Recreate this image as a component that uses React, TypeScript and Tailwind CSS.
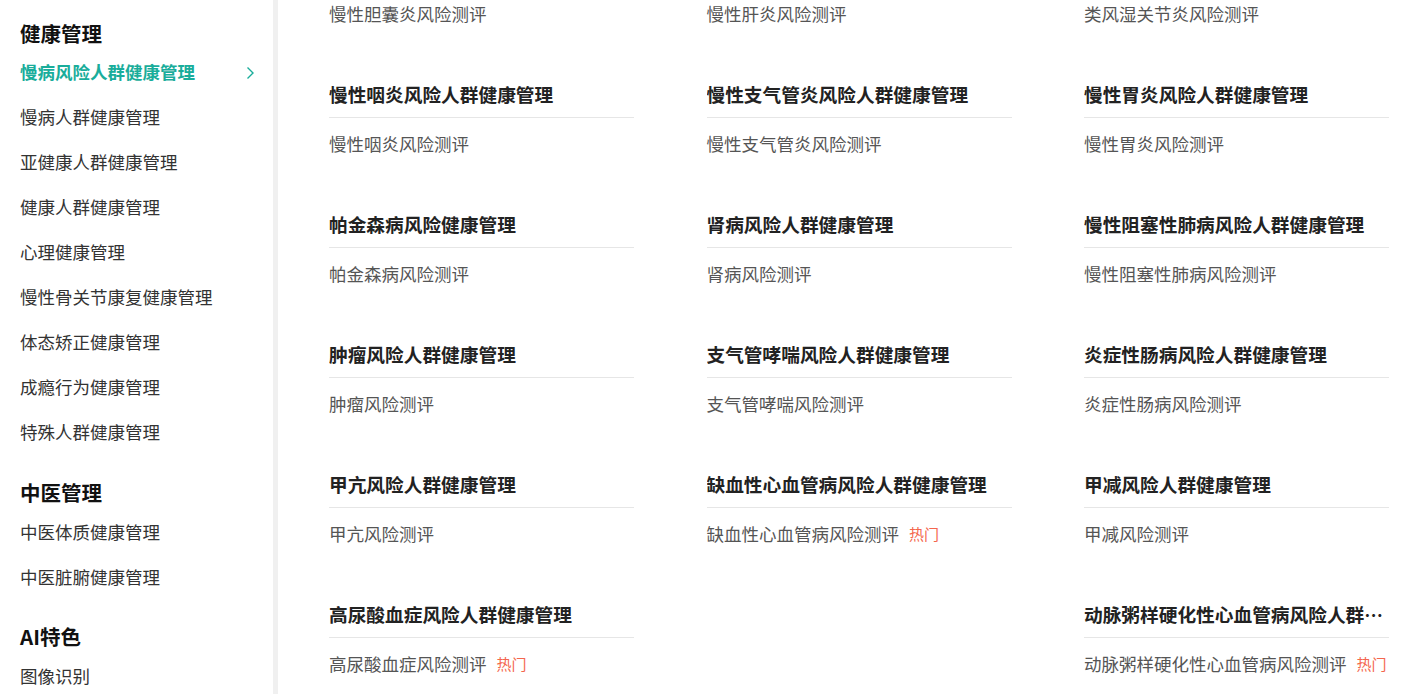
import React from "react";

type Card = { title?: string; item: string; hot?: boolean } | null;

const sections: { heading: string; items: string[] }[] = [
  {
    heading: "健康管理",
    items: [
      "慢病风险人群健康管理",
      "慢病人群健康管理",
      "亚健康人群健康管理",
      "健康人群健康管理",
      "心理健康管理",
      "慢性骨关节康复健康管理",
      "体态矫正健康管理",
      "成瘾行为健康管理",
      "特殊人群健康管理",
    ],
  },
  { heading: "中医管理", items: ["中医体质健康管理", "中医脏腑健康管理"] },
  { heading: "AI特色", items: ["图像识别"] },
];

const topRow: string[] = ["慢性胆囊炎风险测评", "慢性肝炎风险测评", "类风湿关节炎风险测评"];

const rows: Card[][] = [
  [
    { title: "慢性咽炎风险人群健康管理", item: "慢性咽炎风险测评" },
    { title: "慢性支气管炎风险人群健康管理", item: "慢性支气管炎风险测评" },
    { title: "慢性胃炎风险人群健康管理", item: "慢性胃炎风险测评" },
  ],
  [
    { title: "帕金森病风险健康管理", item: "帕金森病风险测评" },
    { title: "肾病风险人群健康管理", item: "肾病风险测评" },
    { title: "慢性阻塞性肺病风险人群健康管理", item: "慢性阻塞性肺病风险测评" },
  ],
  [
    { title: "肿瘤风险人群健康管理", item: "肿瘤风险测评" },
    { title: "支气管哮喘风险人群健康管理", item: "支气管哮喘风险测评" },
    { title: "炎症性肠病风险人群健康管理", item: "炎症性肠病风险测评" },
  ],
  [
    { title: "甲亢风险人群健康管理", item: "甲亢风险测评" },
    { title: "缺血性心血管病风险人群健康管理", item: "缺血性心血管病风险测评", hot: true },
    { title: "甲减风险人群健康管理", item: "甲减风险测评" },
  ],
  [
    { title: "高尿酸血症风险人群健康管理", item: "高尿酸血症风险测评", hot: true },
    null,
    { title: "动脉粥样硬化性心血管病风险人群健康管理", item: "动脉粥样硬化性心血管病风险测评", hot: true },
  ],
];

const font = { fontFamily: '"Noto Sans CJK SC", "Noto Sans", sans-serif' };

function Chevron() {
  return (
    <svg width="10" height="14" viewBox="0 0 10 14" fill="none" className="text-[#1aad9b]">
      <path d="M2.5 1.5 L8 7 L2.5 12.5" stroke="currentColor" strokeWidth="1.4" />
    </svg>
  );
}

function SubItem({ text, hot }: { text: string; hot?: boolean }) {
  return (
    <div className="flex items-center h-[24px] leading-[24px] text-[17.5px] text-[#555] whitespace-nowrap">
      <span>{text}</span>
      {hot && <span className="ml-[10px] text-[15px] text-[#f4664d]">热门</span>}
    </div>
  );
}

export default function App() {
  return (
    <div className="flex w-[1401px] h-[694px] overflow-hidden bg-white" style={font}>
      <aside className="w-[273px] shrink-0 pl-5 pr-[18px] pt-[18px]">
        {sections.map((s, si) => (
          <div key={s.heading} className={si === 0 ? "" : si === 1 ? "mt-[22px]" : "mt-[21px]"}>
            <h2 className="h-[30px] leading-[30px] text-[20.5px] font-bold text-[#111]">{s.heading}</h2>
            <ul className={si === 0 ? "mt-[2px]" : "mt-[3px]"}>
              {s.items.map((it, i) => {
                const active = si === 0 && i === 0;
                return (
                  <li
                    key={it}
                    className={`h-[45px] flex items-center justify-between text-[17.5px] ${
                      active ? "text-[#1aad9b] font-bold" : "text-[#333]"
                    }`}
                  >
                    <span>{it}</span>
                    {active && <Chevron />}
                  </li>
                );
              })}
            </ul>
          </div>
        ))}
      </aside>
      <div className="w-[5px] shrink-0 bg-[#f0f0f0]" />
      <main className="pl-[51px] pt-[2px]">
        <div className="grid grid-cols-[305px_305px_305px] gap-x-[72.5px] gap-y-[55px]">
          {topRow.map((t) => (
            <SubItem key={t} text={t} />
          ))}
          {rows.flat().map((c, i) =>
            c ? (
              <div key={i} className="min-w-0">
                <div className="h-[26px] leading-[26px] text-[18.7px] font-bold text-[#222] truncate">{c.title}</div>
                <div className="mt-[10px] border-b border-[#e6e6e6]" />
                <div className="mt-[14px]">
                  <SubItem text={c.item} hot={c.hot} />
                </div>
              </div>
            ) : (
              <div key={i} />
            )
          )}
        </div>
      </main>
    </div>
  );
}
